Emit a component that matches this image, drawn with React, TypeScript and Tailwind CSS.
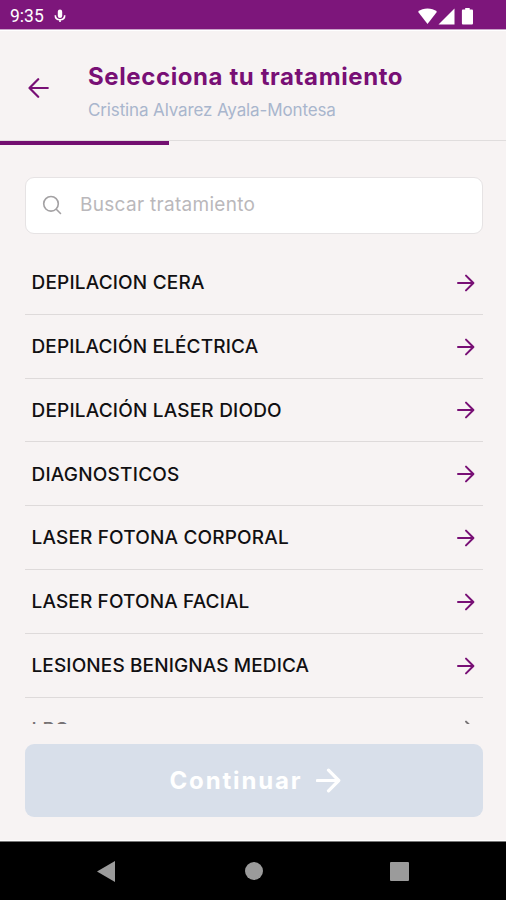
import { clsx } from "clsx";

interface Treatment {
  name: string;
  tracking: string;
}

const TREATMENTS: Treatment[] = [
  { name: "DEPILACION CERA", tracking: "tracking-[0.18px]" },
  { name: "DEPILACIÓN ELÉCTRICA", tracking: "tracking-[0.16px]" },
  { name: "DEPILACIÓN LASER DIODO", tracking: "tracking-[0.19px]" },
  { name: "DIAGNOSTICOS", tracking: "tracking-[0.22px]" },
  { name: "LASER FOTONA CORPORAL", tracking: "tracking-[0.17px]" },
  { name: "LASER FOTONA FACIAL", tracking: "tracking-[0.14px]" },
  { name: "LESIONES BENIGNAS MEDICA", tracking: "tracking-[0.12px]" },
  { name: "LPG", tracking: "tracking-[0.15px]" }
];

function ArrowRight({ className, strokeWidth = 2 }: { className: string; strokeWidth?: number }) {
  return (
    <svg className={className} viewBox="0 0 18 18" fill="none" stroke="currentColor" strokeWidth={strokeWidth}>
      <path d="M1 9h15M9 1.600 16.400 9 9 16.400" strokeLinecap="round" strokeLinejoin="round" />
    </svg>
  );
}

function StatusBar() {
  return (
    <div className="flex h-[30px] shrink-0 items-center border-b border-[#c9a3c8] bg-[#7d167b] pt-[3px] pr-8 pl-2.5 text-white">
      <span className="w-[34px] whitespace-nowrap font-['Roboto',sans-serif] text-[17.500px]">9:35</span>
      <svg className="ml-[10px] h-[14px] w-3" viewBox="0 0 12 14" fill="none">
        <rect x="3.800" y="0.500" width="4.400" height="8.500" rx="2.200" fill="#fff" />
        <path d="M1.300 6.200c0 2.800 2 4.500 4.700 4.500s4.700-1.700 4.700-4.500M6 10.700v2.300" stroke="#fff" strokeWidth="1.600" />
      </svg>
      <svg className="ml-auto h-[17px] w-[56px]" viewBox="0 0 56 17" fill="#fff">
        <path d="M0 3.800C5.300-.6 13.700-.6 19 3.800L9.500 16z" />
        <path d="M36.500.5v16H20.500z" />
        <path d="M47.200 0h4.500v1.500h2c.8 0 1.300.5 1.300 1.300v12.400c0 .8-.5 1.300-1.300 1.300h-8.500c-.8 0-1.300-.5-1.300-1.300V2.800c0-.8.5-1.300 1.300-1.300h2z" />
      </svg>
    </div>
  );
}

function Header() {
  return (
    <header className="shrink-0">
      <div className="flex h-[111px] border-t border-b border-t-white border-b-[#e0dddd]">
        <svg
          className="mt-[47px] ml-[28px] h-5 w-[22px] text-[#780f75]"
          viewBox="0 0 22 20"
          fill="none"
          stroke="currentColor"
          strokeWidth="2.200"
        >
          <path d="M19.800 10H1.500M10.200 1.200 1.500 10l8.700 8.800" strokeLinecap="round" strokeLinejoin="round" />
        </svg>
        <div className="mt-[30px] ml-[38px] whitespace-nowrap">
          <h1 className="text-[24px] leading-[32px] font-bold tracking-[0.600px] text-[#780f75]">Selecciona tu tratamiento</h1>
          <p className="mt-[2px] text-[17px] leading-[30px] tracking-[-0.130px] text-[#a9b6cd]">
            Cristina Alvarez Ayala-Montesa
          </p>
        </div>
      </div>
      <div className="h-1 w-[169px] bg-[#730f70]" />
    </header>
  );
}

function TreatmentRow({ treatment, faded }: { treatment: Treatment; faded: boolean }) {
  return (
    <li
      className={clsx(
        "flex h-[63.800px] shrink-0 items-center justify-between border-b border-[#dedada] pr-2 pl-[6.500px]",
        faded ? "text-[#777375]" : "text-[#111012]"
      )}
    >
      <span className={clsx("pt-[2px] text-[19px] font-medium whitespace-nowrap", treatment.tracking)}>{treatment.name}</span>
      <ArrowRight className={clsx("mt-px size-[18px]", !faded && "text-[#780f75]")} />
    </li>
  );
}

function NavigationBar() {
  return (
    <nav className="flex h-[59px] shrink-0 items-center border-t border-[#777] bg-black pl-[97px] text-[#9b9b9b]">
      <svg className="h-[21px] w-[18px]" viewBox="0 0 18 21" fill="currentColor">
        <path d="M18 0v21L0 10.500z" />
      </svg>
      <span className="ml-[130px] size-[18px] rounded-full bg-[#9b9b9b]" />
      <span className="ml-[127px] size-[19px] rounded-[1px] bg-[#9b9b9b]" />
    </nav>
  );
}

export default function App() {
  return (
    <div className="flex h-[900px] w-[506px] flex-col overflow-hidden bg-[#f7f3f3] font-['Inter',sans-serif]">
      <StatusBar />
      <Header />
      <main className="flex min-h-0 flex-1 flex-col border-b border-white pt-[32px] pr-[23px] pl-[25px]">
        <label className="flex h-[57px] shrink-0 items-center rounded-[9px] border border-[#e6e3e4] bg-white pl-4">
          <svg className="mb-[2px] size-5 text-[#a3a1a3]" viewBox="0 0 20 20" fill="none" stroke="currentColor" strokeWidth="1.600">
            <circle cx="9" cy="8.800" r="7.300" />
            <path d="m14.300 14.300 4.200 4.200" strokeLinecap="round" />
          </svg>
          <input
            className="ml-[18px] w-[300px] text-[19px] tracking-[0.300px] outline-none placeholder:text-[#bab8bb]"
            placeholder="Buscar tratamiento"
          />
        </label>
        <ul className="mt-[17px] flex h-[473px] shrink-0 flex-col overflow-hidden">
          {TREATMENTS.map((treatment, index) => (
            <TreatmentRow key={treatment.name} treatment={treatment} faded={index === TREATMENTS.length - 1} />
          ))}
        </ul>
        <button className="mt-5 flex h-[73px] shrink-0 items-center justify-center rounded-[9px] bg-[#d8dfea] pl-[3px] text-white">
          <span className="text-[24px] font-bold tracking-[1.850px]">Continuar</span>
          <ArrowRight className="ml-[14px] size-[25px]" strokeWidth={2.300} />
        </button>
      </main>
      <NavigationBar />
    </div>
  );
}
